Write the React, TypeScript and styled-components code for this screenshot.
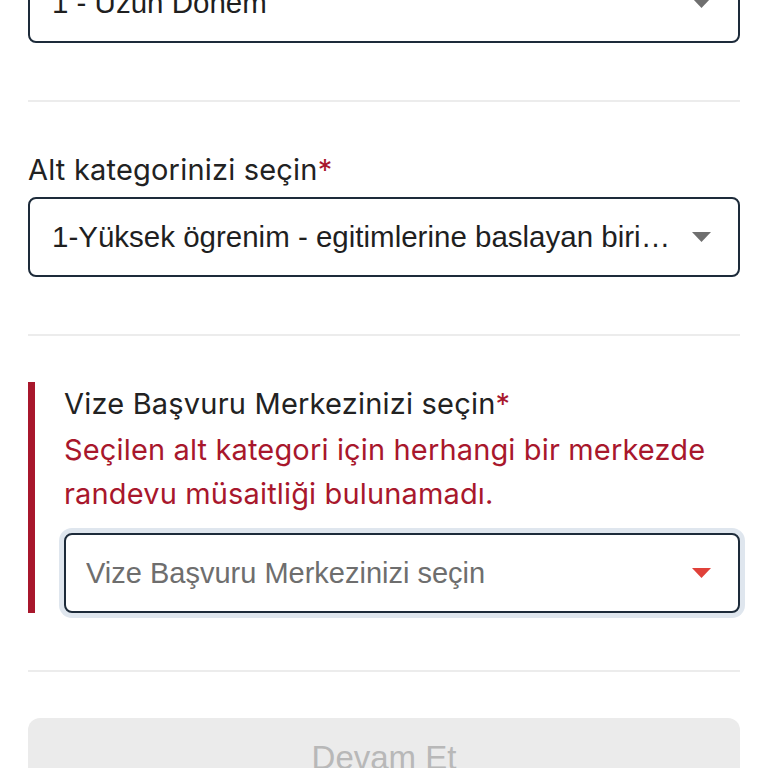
import React from "react";
import styled, { createGlobalStyle } from "styled-components";

const GlobalStyle = createGlobalStyle`
  html, body {
    margin: 0;
    padding: 0;
    background: #ffffff;
    overflow: hidden;
  }
`;

const Page = styled.div`
  width: 768px;
  height: 768px;
  overflow: hidden;
  background: #fff;
`;

const Form = styled.div`
  display: flex;
  flex-direction: column;
  padding: 0 28px;
  margin-top: -37px;
`;

const Section = styled.div<{ $error?: boolean }>`
  display: flex;
  flex-direction: column;
  padding-top: 5px;
  border-left: ${(p) => (p.$error ? "7px solid #a8172c" : "none")};
  padding-left: ${(p) => (p.$error ? "29px" : "0")};
`;

const Label = styled.div<{ $tight?: boolean }>`
  font-family: Inter, "Noto Sans", sans-serif;
  font-size: 29px;
  letter-spacing: 0.2px;
  line-height: 34px;
  color: #222222;
  margin-bottom: ${(p) => (p.$tight ? "0" : "10px")};
`;

const Required = styled.span`
  color: #a8172c;
`;

const ErrorText = styled.div`
  font-family: Inter, "Noto Sans", sans-serif;
  font-size: 29px;
  letter-spacing: 0.15px;
  line-height: 44px;
  color: #a8172c;
  margin-top: 7px;
  margin-bottom: 17px;
`;

const SelectBox = styled.div<{ $focused?: boolean }>`
  display: flex;
  align-items: center;
  height: 80px;
  box-sizing: border-box;
  border: 2px solid #1d2b3a;
  border-radius: 8px;
  padding: 0 27px 0 ${(p) => (p.$focused ? "20px" : "22px")};
  gap: 15px;
  background: #fff;
  box-shadow: ${(p) => (p.$focused ? "0 0 0 5px #dfe6ee" : "none")};
`;

const SelectText = styled.div<{ $placeholder?: boolean }>`
  flex: 1;
  min-width: 0;
  font-family: "Liberation Sans", Arial, sans-serif;
  font-size: ${(p) => (p.$placeholder ? "29px" : "29.5px")};
  color: ${(p) => (p.$placeholder ? "#6e6e6e" : "#1f1f1f")};
  white-space: nowrap;
  overflow: hidden;
  text-overflow: ellipsis;
`;

const Caret = ({ color }: { color: string }) => (
  <svg width="19" height="10" viewBox="0 0 19 10">
    <path d="M0 0 H19 L9.5 10 Z" fill={color} />
  </svg>
);

const Divider = styled.div`
  height: 2px;
  background: #ececec;
  margin: 57px 0 46px;
`;

const ContinueButton = styled.button`
  width: 100%;
  height: 80px;
  border: none;
  border-radius: 12px;
  background: #ebebeb;
  color: #b8b8b8;
  font-family: "Liberation Sans", Arial, sans-serif;
  font-size: 33px;
  padding: 0;
  cursor: default;
`;

export default function App() {
  return (
    <Page>
      <GlobalStyle />
      <Form>
        <SelectBox>
          <SelectText>1 - Uzun Dönem</SelectText>
          <Caret color="#6f6f6f" />
        </SelectBox>

        <Divider />

        <Section>
          <Label>
            Alt kategorinizi seçin<Required>*</Required>
          </Label>
          <SelectBox>
            <SelectText>
              1-Yüksek ögrenim - egitimlerine baslayan birinci yil ögrencileri
            </SelectText>
            <Caret color="#6f6f6f" />
          </SelectBox>
        </Section>

        <Divider />

        <Section $error>
          <Label $tight>
            Vize Başvuru Merkezinizi seçin<Required>*</Required>
          </Label>
          <ErrorText>
            Seçilen alt kategori için herhangi bir merkezde
            <br />
            randevu müsaitliği bulunamadı.
          </ErrorText>
          <SelectBox $focused>
            <SelectText $placeholder>Vize Başvuru Merkezinizi seçin</SelectText>
            <Caret color="#e0413a" />
          </SelectBox>
        </Section>

        <Divider />

        <ContinueButton disabled>Devam Et</ContinueButton>
      </Form>
    </Page>
  );
}
